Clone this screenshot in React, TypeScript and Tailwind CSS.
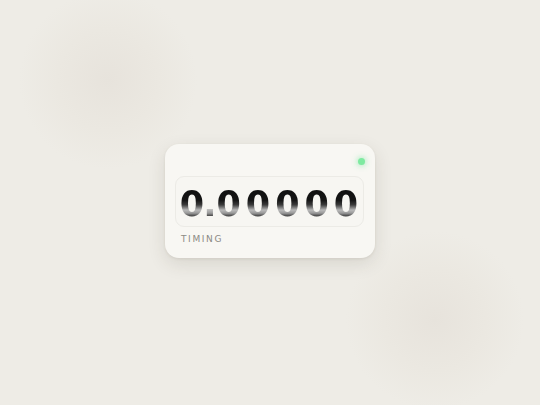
export default function App() {
  return (
    <div className="relative flex h-screen w-full items-center justify-center overflow-hidden bg-[#eeece6] pb-[4px] font-['DejaVu_Sans',sans-serif]">
      <div className="pointer-events-none absolute left-[18px] top-[-10px] h-[180px] w-[180px] rounded-full bg-[radial-gradient(circle,#e7e3dc_0%,#ebe8e1_40%,rgba(238,236,230,0)_70%)]" />
      <div className="pointer-events-none absolute left-[345px] top-[230px] h-[180px] w-[180px] rounded-full bg-[radial-gradient(circle,#e7e3dc_0%,#ebe8e1_40%,rgba(238,236,230,0)_70%)]" />

      <div className="relative flex h-[114px] w-[210px] flex-col rounded-[14px] bg-[#f8f7f3] px-[10px] pt-[32px] shadow-[0_6px_18px_rgba(60,50,30,0.12),0_1px_3px_rgba(60,50,30,0.08)]">
        <span className="absolute right-[10px] top-[14px] h-[7px] w-[7px] rounded-full bg-[#7eeaa0] shadow-[0_0_6px_rgba(74,222,128,0.7)]" />

        <div className="flex h-[51px] w-[189px] items-center justify-center rounded-[9px] border border-[#ecebe6] bg-[#f7f6f2] pt-[6px]">
          <span className="flex bg-[linear-gradient(to_bottom,#0e0e0e_0%,#151515_40%,#3a3a3a_52%,#b8b8b8_66%,#9a9a9a_74%,#2a2a2a_84%,#111_100%)] bg-clip-text pl-[4px] text-[35px] font-bold leading-[38px] tracking-[5px] text-transparent">
            <span className="tracking-[-1px]">0</span>
            <span className="tracking-[0px]">.</span>
            <span>00000</span>
          </span>
        </div>

        <span className="mt-[6px] pl-[6px] text-[9px] leading-[12px] tracking-[0.18em] text-[#8c8a84]">TIMING</span>
      </div>
    </div>
  );
}
